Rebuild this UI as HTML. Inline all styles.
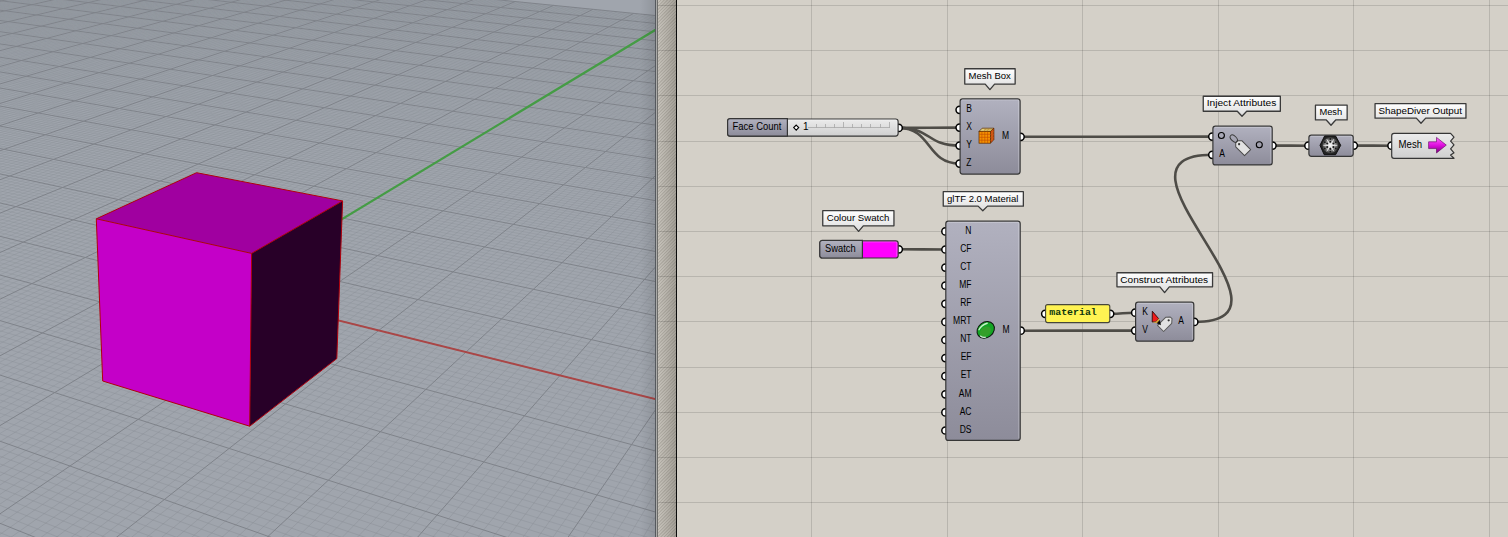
<!DOCTYPE html>
<html><head><meta charset="utf-8"><style>
html,body{margin:0;padding:0;}
body{width:1508px;height:537px;overflow:hidden;position:relative;background:#d4d0c8;font-family:"Liberation Sans",sans-serif;}
#sep{position:absolute;left:655px;top:0;width:22px;height:537px;}
</style></head><body>
<svg width="655" height="537" viewBox="0 0 655 537" style="position:absolute;left:0;top:0">
<defs><linearGradient id="vig" x1="0" x2="1"><stop offset="0" stop-color="#000" stop-opacity="0"/><stop offset="1" stop-color="#000" stop-opacity="0.10"/></linearGradient></defs>
<rect width="655" height="537" fill="#a0a5ad"/>
<polygon points="-5,-5 660,-5 660,16.03 -5,-50.55" fill="#a0a5ad"/>
<path d="M-2.0 -1.4L0.9 -2.0M-2.0 -0.4L5.5 -2.0M-2.0 0.6L10.2 -2.0M-2.0 2.7L19.4 -2.0M-2.0 3.7L24.1 -2.0M-2.0 4.8L28.7 -2.0M-2.0 5.9L33.4 -2.0M-2.0 6.9L38.0 -2.0M-2.0 8.0L42.6 -2.0M-2.0 9.1L47.3 -2.0M-2.0 10.2L51.9 -2.0M-2.0 11.3L56.6 -2.0M-2.0 13.5L65.8 -2.0M-2.0 14.7L70.5 -2.0M-2.0 15.8L75.1 -2.0M-2.0 17.0L79.8 -2.0M-2.0 18.1L84.4 -2.0M-2.0 19.3L89.0 -2.0M-2.0 20.5L93.7 -2.0M-2.0 21.7L98.3 -2.0M-2.0 22.9L103.0 -2.0M-2.0 25.4L112.2 -2.0M-2.0 26.6L116.9 -2.0M-2.0 27.9L121.5 -2.0M-2.0 29.2L126.1 -2.0M-2.0 30.4L130.8 -2.0M-2.0 31.7L135.4 -2.0M-2.0 33.0L140.0 -2.0M-2.0 34.4L144.7 -2.0M-2.0 35.7L149.3 -2.0M-2.0 38.4L158.6 -2.0M-2.0 39.8L163.2 -2.0M-2.0 41.1L167.9 -2.0M-2.0 42.5L172.5 -2.0M-2.0 44.0L177.1 -2.0M-2.0 45.4L181.8 -2.0M-2.0 46.8L186.4 -2.0M-2.0 48.3L191.0 -2.0M-2.0 49.7L195.6 -2.0M-2.0 52.7L204.9 -2.0M-2.0 54.2L209.5 -2.0M-2.0 55.8L214.2 -2.0M-2.0 57.3L218.8 -2.0M-2.0 58.9L223.4 -2.0M-2.0 60.5L228.1 -2.0M-2.0 62.1L232.7 -2.0M-2.0 63.7L237.3 -2.0M-2.0 65.3L242.0 -2.0M-2.0 68.6L251.2 -2.0M-2.0 70.3L255.8 -2.0M-2.0 72.0L260.5 -2.0M-2.0 73.7L265.1 -2.0M-2.0 75.5L269.7 -2.0M-2.0 77.2L274.4 -2.0M-2.0 79.0L279.0 -2.0M-2.0 80.8L283.6 -2.0M-2.0 82.6L288.2 -2.0M-2.0 86.4L297.5 -2.0M-2.0 88.2L302.1 -2.0M-2.0 90.1L306.7 -2.0M-2.0 92.1L311.4 -2.0M-2.0 94.0L316.0 -2.0M-2.0 96.0L320.6 -2.0M-2.0 98.0L325.2 -2.0M-2.0 100.0L329.9 -2.0M-2.0 102.1L334.5 -2.0M-2.0 106.2L343.7 -2.0M-2.0 108.3L348.4 -2.0M-2.0 110.5L353.0 -2.0M-2.0 112.7L357.6 -2.0M-2.0 114.9L362.2 -2.0M-2.0 117.1L366.9 -2.0M-2.0 119.4L371.5 -2.0M-2.0 121.6L376.1 -2.0M-2.0 124.0L380.7 -2.0M-2.0 128.7L390.0 -2.0M-2.0 131.1L394.6 -2.0M-2.0 133.5L399.2 -2.0M-2.0 136.0L403.8 -2.0M-2.0 138.5L408.4 -2.0M-2.0 141.0L413.1 -2.0M-2.0 143.6L417.7 -2.0M-2.0 146.2L422.3 -2.0M-2.0 148.8L426.9 -2.0M-2.0 154.2L436.2 -2.0M-2.0 157.0L440.8 -2.0M-2.0 159.8L445.4 -2.0M-2.0 162.6L450.0 -2.0M-2.0 165.5L454.6 -2.0M-2.0 168.4L459.3 -2.0M-2.0 171.3L463.9 -2.0M-2.0 174.3L468.5 -2.0M-2.0 177.4L473.1 -2.0M-2.0 183.6L481.8 -1.8M-2.0 186.8L485.5 -1.4M-2.0 190.0L489.2 -1.1M-2.0 193.3L492.9 -0.7M-2.0 196.6L496.6 -0.3M-2.0 200.0L500.3 0.0M-2.0 203.4L504.0 0.4M-2.0 206.9L507.8 0.8M-2.0 210.4L511.5 1.2M-2.0 217.7L519.0 1.9M-2.0 221.4L522.8 2.3M-2.0 225.2L526.6 2.7M-2.0 229.0L530.4 3.1M-2.0 232.9L534.2 3.4M-2.0 236.9L538.1 3.8M-2.0 240.9L541.9 4.2M-2.0 245.0L545.8 4.6M-2.0 249.2L549.6 5.0M-2.0 257.7L557.4 5.8M-2.0 262.1L561.3 6.1M-2.0 266.6L565.2 6.5M-2.0 271.1L569.1 6.9M-2.0 275.8L573.1 7.3M-2.0 280.5L577.0 7.7M-2.0 285.3L581.0 8.1M-2.0 290.2L585.0 8.5M-2.0 295.2L588.9 8.9M30.2 289.5L597.0 9.7M49.9 284.8L601.0 10.1M-2.0 310.3L-1.5 310.4M63.6 283.0L605.0 10.5M-2.0 305.6L18.2 311.3M82.8 278.4L609.1 10.9M-2.0 300.9L51.9 316.1M101.6 274.0L613.2 11.3M-2.0 296.3L86.2 321.0M125.0 267.0L617.2 11.7M-2.0 291.8L121.1 326.0M143.0 262.7L621.3 12.2M-2.0 287.4L156.6 331.0M151.2 263.6L625.4 12.6M-2.0 283.0L192.8 336.2M173.5 256.8L629.5 13.0M-2.0 278.7L229.6 341.4M207.6 248.7L637.8 13.8M-2.0 270.3L288.5 347.7M224.2 244.8L642.0 14.2M-2.0 266.3L326.9 353.2M236.6 243.1L646.2 14.6M-2.0 262.2L366.1 358.7M252.8 239.3L650.3 15.1M-2.0 258.3L405.9 364.4M268.7 235.6L654.5 15.5M-2.0 254.4L428.2 365.4M288.4 229.5L657.0 16.9M-2.0 250.5L469.1 371.2M303.7 225.9L657.0 19.8M-2.0 246.8L510.8 377.1M318.7 222.3L657.0 22.8M-2.0 243.1L553.3 383.1M337.4 216.5L657.0 25.8M-2.0 239.4L576.5 384.2M366.1 209.8L657.0 32.1M-2.0 232.2L657.0 394.7M377.3 208.3L657.0 35.3M-2.0 228.7L657.0 390.0M397.5 201.1L657.0 38.7M-2.0 225.3L657.0 385.4M410.9 198.0L657.0 42.1M-2.0 221.9L657.0 380.8M421.8 196.5L657.0 45.6M-2.0 218.5L657.0 376.3M440.7 189.7L657.0 49.2M-2.0 215.2L657.0 371.9M453.5 186.7L657.0 52.9M-2.0 212.0L657.0 367.5M464.0 185.2L657.0 56.6M-2.0 208.8L657.0 363.2M481.7 178.8L657.0 60.5M-2.0 205.6L657.0 359.0M509.0 171.2L657.0 68.6M-2.0 199.4L657.0 350.7M520.7 168.5L657.0 72.8M-2.0 196.4L657.0 346.6M532.3 165.9L657.0 77.1M-2.0 193.4L657.0 342.6M548.2 160.1L657.0 81.5M-2.0 190.4L657.0 338.6M557.9 158.7L657.0 86.1M-2.0 187.5L657.0 334.7M573.1 153.1L657.0 90.8M-2.0 184.7L657.0 330.9M583.9 150.7L657.0 95.6M-2.0 181.8L657.0 327.1M597.2 146.3L657.0 100.6M-2.0 179.0L657.0 323.3M607.6 144.0L657.0 105.7M-2.0 176.3L657.0 319.6M630.6 137.5L657.0 116.4M-2.0 170.9L657.0 312.4M644.0 132.5L657.0 122.0M-2.0 168.2L657.0 308.8M653.8 130.4L657.0 127.8M-2.0 165.6L657.0 305.3M-2.0 163.0L657.0 301.8M-2.0 160.4L657.0 298.4M-2.0 157.9L657.0 295.0M-2.0 155.4L657.0 291.7M-2.0 153.0L657.0 288.4M-2.0 150.5L657.0 285.1M-2.0 145.8L657.0 278.7M-2.0 143.4L657.0 275.6M-2.0 141.1L657.0 272.5M-2.0 138.8L657.0 269.4M-2.0 136.6L657.0 266.4M-2.0 134.4L657.0 263.4M-2.0 132.1L657.0 260.4M-2.0 130.0L657.0 257.5M-2.0 127.8L657.0 254.6M-2.0 123.6L657.0 248.9M-2.0 121.5L657.0 246.2M-2.0 119.4L657.0 243.4M-2.0 117.4L657.0 240.7M-2.0 115.4L657.0 238.0M-2.0 113.4L657.0 235.3M-2.0 111.4L657.0 232.7M-2.0 109.5L657.0 230.1M-2.0 107.6L657.0 227.5M-2.0 103.8L657.0 222.4M-2.0 101.9L657.0 219.9M-2.0 100.1L657.0 217.4M-2.0 98.3L657.0 215.0M-2.0 96.5L657.0 212.6M-2.0 94.7L657.0 210.2M-2.0 92.9L657.0 207.8M-2.0 91.2L657.0 205.5M-2.0 89.5L657.0 203.2M-2.0 86.1L657.0 198.6M-2.0 84.4L657.0 196.3M-2.0 82.7L657.0 194.1M-2.0 81.1L657.0 191.9M-2.0 79.5L657.0 189.7M-2.0 77.9L657.0 187.6M-2.0 76.3L657.0 185.5M-2.0 74.7L657.0 183.3M-2.0 73.1L657.0 181.2M-2.0 70.0L657.0 177.1M-2.0 68.5L657.0 175.1M-2.0 67.0L657.0 173.1M-2.0 65.5L657.0 171.1M-2.0 64.1L657.0 169.1M-2.0 62.6L657.0 167.2M-2.0 61.2L657.0 165.2M-2.0 59.7L657.0 163.3M-2.0 58.3L657.0 161.4M-2.0 55.5L657.0 157.7M-2.0 54.2L657.0 155.8M-2.0 52.8L657.0 154.0M-2.0 51.4L657.0 152.2M-2.0 50.1L657.0 150.4M-2.0 48.8L657.0 148.6M-2.0 47.5L657.0 146.8M-2.0 46.2L657.0 145.1M-2.0 44.9L657.0 143.3M-2.0 42.3L657.0 139.9M-2.0 41.1L657.0 138.2M-2.0 39.8L657.0 136.6M-2.0 38.6L657.0 134.9M-2.0 37.4L657.0 133.3M-2.0 36.2L657.0 131.6M-2.0 34.9L657.0 130.0M-2.0 33.8L657.0 128.4M-2.0 32.6L657.0 126.8M-2.0 30.2L657.0 123.7M-2.0 29.1L657.0 122.2M-2.0 27.9L657.0 120.6M-2.0 26.8L657.0 119.1M-2.0 25.7L657.0 117.6M-2.0 24.6L657.0 116.1M-2.0 23.5L657.0 114.6M-2.0 22.4L657.0 113.2M-2.0 21.3L657.0 111.7M-2.0 19.1L657.0 108.8M-2.0 18.1L657.0 107.4M-2.0 17.0L657.0 106.0M-2.0 16.0L657.0 104.6M-2.0 15.0L657.0 103.2M-2.0 13.9L657.0 101.8M-2.0 12.9L657.0 100.5M-2.0 11.9L657.0 99.1M-2.0 10.9L657.0 97.8M-2.0 8.9L657.0 95.1M-2.0 7.9L657.0 93.8M-2.0 7.0L657.0 92.5M-2.0 6.0L657.0 91.2M-2.0 5.1L657.0 89.9M-2.0 4.1L657.0 88.7M-2.0 3.2L657.0 87.4M-2.0 2.2L657.0 86.1M-2.0 1.3L657.0 84.9M-2.0 -0.5L657.0 82.4M-2.0 -1.4L657.0 81.2M0.6 -2.0L657.0 80.0M7.8 -2.0L657.0 78.8M15.0 -2.0L657.0 77.6M22.1 -2.0L657.0 76.5M29.3 -2.0L657.0 75.3M36.5 -2.0L657.0 74.1M43.7 -2.0L657.0 73.0M58.0 -2.0L657.0 70.7M65.2 -2.0L657.0 69.6M72.3 -2.0L657.0 68.4M79.5 -2.0L657.0 67.3M86.7 -2.0L657.0 66.2M93.8 -2.0L657.0 65.1M101.0 -2.0L657.0 64.0M108.2 -2.0L657.0 63.0M115.3 -2.0L657.0 61.9M129.7 -2.0L657.0 59.8M136.8 -2.0L657.0 58.7M144.0 -2.0L657.0 57.7M151.2 -2.0L657.0 56.6M158.3 -2.0L657.0 55.6M165.5 -2.0L657.0 54.6M172.6 -2.0L657.0 53.6M179.8 -2.0L657.0 52.6M187.0 -2.0L657.0 51.6M201.3 -2.0L657.0 49.6M208.4 -2.0L657.0 48.6M215.6 -2.0L657.0 47.6M222.7 -2.0L657.0 46.7M229.9 -2.0L657.0 45.7M237.1 -2.0L657.0 44.8M244.2 -2.0L657.0 43.8M251.4 -2.0L657.0 42.9M258.5 -2.0L657.0 41.9M272.8 -2.0L657.0 40.1M280.0 -2.0L657.0 39.2M287.1 -2.0L657.0 38.2M294.3 -2.0L657.0 37.3M301.4 -2.0L657.0 36.4M308.6 -2.0L657.0 35.6M315.7 -2.0L657.0 34.7M322.9 -2.0L657.0 33.8M330.0 -2.0L657.0 32.9M344.3 -2.0L657.0 31.2M351.4 -2.0L657.0 30.3M358.6 -2.0L657.0 29.5M365.7 -2.0L657.0 28.6M372.9 -2.0L657.0 27.8M380.0 -2.0L657.0 26.9M387.2 -2.0L657.0 26.1M394.3 -2.0L657.0 25.3M401.4 -2.0L657.0 24.4M415.7 -2.0L657.0 22.8M422.9 -2.0L657.0 22.0M430.0 -2.0L657.0 21.2M437.1 -2.0L657.0 20.4M444.3 -2.0L657.0 19.6M451.4 -2.0L657.0 18.8M458.5 -2.0L657.0 18.0M465.7 -2.0L657.0 17.3M472.8 -2.0L657.0 16.5" stroke="#878c94" stroke-width="1" fill="none" opacity="0.315"/><path d="M-2.0 433.3L41.9 448.7M-2.0 426.2L84.3 456.2M-2.0 419.3L109.4 457.5M-2.0 412.5L153.2 465.2M-2.0 405.8L197.9 473.1M-2.0 399.3L243.6 481.1M-2.0 392.9L290.3 489.3M-2.0 386.6L317.0 490.8M-2.0 380.5L365.2 499.2M-2.0 368.5L465.0 516.7M-2.0 362.7L493.0 518.3M-2.0 357.0L545.1 527.4M-2.0 351.5L598.5 536.6M-2.0 346.0L627.5 538.3M-2.0 340.6L653.3 539.0M-2.0 335.3L657.0 533.0M-2.0 330.1L657.0 526.1M-2.0 325.1L657.0 519.3M-2.0 305.4L30.2 289.5M-2.0 315.1L657.0 505.9M-2.0 310.7L49.9 284.8M-1.5 310.4L657.0 499.5M-2.0 316.1L63.6 283.0M18.2 311.3L657.0 493.1M-2.0 321.6L82.8 278.4M51.9 316.1L657.0 486.8M-2.0 327.1L101.6 274.0M86.2 321.0L657.0 480.7M-2.0 332.9L125.0 267.0M121.1 326.0L657.0 474.6M-2.0 338.7L143.0 262.7M156.6 331.0L657.0 468.7M-2.0 344.6L151.2 263.6M192.8 336.2L657.0 462.8M-2.0 350.7L173.5 256.8M229.6 341.4L657.0 457.1M-2.0 363.2L207.6 248.7M288.5 347.7L657.0 445.8M-2.0 369.7L224.2 244.8M326.9 353.2L657.0 440.4M-2.0 376.3L236.6 243.1M366.1 358.7L657.0 435.0M-2.0 383.0L252.8 239.3M405.9 364.4L657.0 429.7M-2.0 389.9L268.7 235.6M428.2 365.4L657.0 424.4M-2.0 397.0L288.4 229.5M469.1 371.2L657.0 419.3M-2.0 404.2L303.7 225.9M510.8 377.1L657.0 414.2M-2.0 411.5L318.7 222.3M553.3 383.1L657.0 409.2M-2.0 419.1L337.4 216.5M576.5 384.2L657.0 404.3M-0.2 433.6L366.1 209.8M16.6 431.3L377.3 208.3M42.1 423.5L397.5 201.1M67.0 415.9L410.9 198.0M83.2 413.6L421.8 196.5M107.3 406.2L440.7 189.7M130.7 399.1L453.5 186.7M146.5 396.8L464.0 185.2M169.1 389.8L481.7 178.8M206.5 380.9L509.0 171.2M227.9 374.3L520.7 168.5M248.8 367.8L532.3 165.9M269.3 361.6L548.2 160.1M283.9 359.4L557.9 158.7M303.7 353.3L573.1 153.1M323.1 347.4L583.9 150.7M346.0 338.5L597.2 146.3M364.5 332.9L607.6 144.0M396.1 325.3L630.6 137.5M413.7 320.0L644.0 132.5M430.9 314.7L653.8 130.4M451.2 306.7L657.0 133.8M467.6 301.7L657.0 139.9M483.7 296.8L657.0 146.3M496.3 294.9L657.0 152.9M511.9 290.1L657.0 159.8M527.3 285.5L657.0 166.8M560.0 273.7L657.0 181.8M574.4 269.4L657.0 189.6M588.6 265.2L657.0 197.8M605.2 258.3L657.0 206.3M618.8 254.3L657.0 215.2M632.2 250.3L657.0 224.4M647.8 243.8L657.0 233.9" stroke="#878c94" stroke-width="1" fill="none" opacity="0.367"/><path d="M-2.0 531.8L15.8 539.0M-2.0 513.5L63.1 539.0M-2.0 504.6L86.7 539.0M-2.0 495.9L110.3 539.0M-2.0 487.5L134.0 539.0M-2.0 479.2L157.6 539.0M-2.0 471.1L181.2 539.0M-2.0 463.2L204.8 539.0M-2.0 455.5L228.5 539.0M-2.0 447.9L252.1 539.0M41.9 448.7L299.3 539.0M84.3 456.2L322.9 539.0M109.4 457.5L346.5 539.0M153.2 465.2L370.1 539.0M197.9 473.1L393.8 539.0M243.6 481.1L417.4 539.0M290.3 489.3L441.0 539.0M317.0 490.8L464.6 539.0M365.2 499.2L488.2 539.0M465.0 516.7L535.3 539.0M493.0 518.3L558.9 539.0M545.1 527.4L582.5 539.0M598.5 536.6L606.1 539.0M627.5 538.3L629.7 539.0M-2.0 434.7L-0.2 433.6M-2.0 442.8L16.6 431.3M-2.0 451.1L42.1 423.5M-2.0 459.6L67.0 415.9M-2.0 468.3L83.2 413.6M-2.0 477.2L107.3 406.2M-2.0 486.3L130.7 399.1M-2.0 495.7L146.5 396.8M-2.0 505.4L169.1 389.8M-2.0 525.4L206.5 380.9M-2.0 535.8L227.9 374.3M8.6 539.0L248.8 367.8M23.7 539.0L269.3 361.6M38.8 539.0L283.9 359.4M53.9 539.0L303.7 353.3M69.0 539.0L323.1 347.4M84.1 539.0L346.0 338.5M99.2 539.0L364.5 332.9M129.4 539.0L396.1 325.3M144.5 539.0L413.7 320.0M159.6 539.0L430.9 314.7M174.7 539.0L451.2 306.7M189.7 539.0L467.6 301.7M204.8 539.0L483.7 296.8M219.9 539.0L496.3 294.9M235.0 539.0L511.9 290.1M250.1 539.0L527.3 285.5M280.3 539.0L560.0 273.7M295.4 539.0L574.4 269.4M310.5 539.0L588.6 265.2M325.5 539.0L605.2 258.3M340.6 539.0L618.8 254.3M355.7 539.0L632.2 250.3M370.8 539.0L647.8 243.8M385.9 539.0L657.0 243.9M401.0 539.0L657.0 254.3M431.1 539.0L657.0 276.5M446.2 539.0L657.0 288.4M461.3 539.0L657.0 300.9M476.4 539.0L657.0 313.9M491.4 539.0L657.0 327.6M506.5 539.0L657.0 341.9M521.6 539.0L657.0 357.1M536.7 539.0L657.0 373.0M551.7 539.0L657.0 389.8M581.9 539.0L657.0 426.3M596.9 539.0L657.0 446.2M612.0 539.0L657.0 467.4M627.1 539.0L657.0 489.9M642.2 539.0L657.0 513.8" stroke="#878c94" stroke-width="1" fill="none" opacity="0.420"/>
<path d="M-2.0 1.7L14.8 -2.0M-2.0 12.4L61.2 -2.0M-2.0 24.1L107.6 -2.0M-2.0 37.0L153.9 -2.0M-2.0 51.2L200.3 -2.0M-2.0 67.0L246.6 -2.0M-2.0 84.5L292.9 -2.0M-2.0 104.1L339.1 -2.0M-2.0 126.3L385.3 -2.0M-2.0 151.5L431.5 -2.0M-2.0 180.5L477.7 -2.0M-2.0 522.5L39.4 539.0M-2.0 214.0L515.3 1.5M-2.0 440.5L275.7 539.0M-2.0 253.4L553.5 5.4M-2.0 374.4L511.8 539.0M-2.0 300.2L593.0 9.3M-2.0 320.0L657.0 512.5M-2.0 356.9L633.7 13.4M-2.0 274.5L657.0 451.4M-2.0 426.8L657.0 28.9M-2.0 235.8L657.0 399.5M-2.0 515.2L657.0 64.5M-2.0 202.5L657.0 354.8M114.3 539.0L657.0 111.0M-2.0 173.5L657.0 316.0M265.2 539.0L657.0 174.2M-2.0 148.1L657.0 281.9M416.0 539.0L657.0 265.2M-2.0 125.7L657.0 251.8M566.8 539.0L657.0 407.6M-2.0 105.7L657.0 224.9M-2.0 87.7L657.0 200.9M-2.0 71.6L657.0 179.2M-2.0 56.9L657.0 159.5M-2.0 43.6L657.0 141.6M-2.0 31.4L657.0 125.3M-2.0 20.2L657.0 110.3M-2.0 9.9L657.0 96.4M-2.0 0.4L657.0 83.7M50.8 -2.0L657.0 71.8M122.5 -2.0L657.0 60.8M194.1 -2.0L657.0 50.6M265.7 -2.0L657.0 41.0M337.2 -2.0L657.0 32.0M408.6 -2.0L657.0 23.6M479.9 -2.0L657.0 15.7" stroke="#7f838a" stroke-width="1" fill="none"/>
<path d="M222.1 291.5L657.0 399.5" stroke="#aa4646" stroke-width="2"/>
<path d="M222.1 291.5L657.0 28.9" stroke="#459c45" stroke-width="2.2"/>
<polygon points="96.3,218.8 196.6,172.7 342.6,200.9 251.6,253.4" fill="#a000a0"/>
<polygon points="96.3,218.8 251.6,253.4 249.7,426.2 102.7,381" fill="#c400c8"/>
<polygon points="251.6,253.4 342.6,200.9 336.8,358.6 249.7,426.2" fill="#280028"/>
<path d="M96.3 218.8L196.6 172.7L342.6 200.9L336.8 358.6L249.7 426.2L102.7 381ZM96.3 218.8L251.6 253.4L342.6 200.9M251.6 253.4L249.7 426.2" stroke="#b0000c" stroke-width="1" fill="none" stroke-linejoin="round"/>
<rect x="640" y="0" width="15" height="537" fill="url(#vig)"/>
</svg>
<div id="sep">
<div style="position:absolute;left:0;top:0;width:1px;height:537px;background:#55595e"></div>
<div style="position:absolute;left:1px;top:0;width:1px;height:537px;background:#a9a9a7"></div>
<div style="position:absolute;left:2px;top:0;width:1px;height:537px;background:#6d6d6b"></div>
<div style="position:absolute;left:3px;top:0;width:18px;height:537px;background:repeating-linear-gradient(-45deg,rgba(0,0,0,0) 0px,rgba(0,0,0,0) 0.9px,rgba(60,55,45,0.15) 1.3px,rgba(60,55,45,0.15) 1.9px,rgba(0,0,0,0) 2.3px),linear-gradient(90deg,#c6c2ba,#b2aea6 60%,#a29e96)"></div>
</div>
<svg width="1508" height="537" viewBox="0 0 1508 537" style="position:absolute;left:0;top:0" font-family="'Liberation Sans', sans-serif">
<defs>
<linearGradient id="cg" x1="0" y1="0" x2="0" y2="1"><stop offset="0" stop-color="#b1b1bf"/><stop offset="1" stop-color="#8d8c9a"/></linearGradient>
<linearGradient id="tg" x1="0" y1="0" x2="0" y2="1"><stop offset="0" stop-color="#ffffff"/><stop offset="1" stop-color="#dcdcdc"/></linearGradient>
<linearGradient id="sg" x1="0" y1="0" x2="0" y2="1"><stop offset="0" stop-color="#ececec"/><stop offset="1" stop-color="#cfcfcf"/></linearGradient>
<linearGradient id="ag" x1="0" y1="0" x2="0" y2="1"><stop offset="0" stop-color="#ff66ff"/><stop offset="0.5" stop-color="#e010e0"/><stop offset="1" stop-color="#7a007a"/></linearGradient>
<radialGradient id="eg" cx="0.35" cy="0.35" r="0.7"><stop offset="0" stop-color="#9ad86a"/><stop offset="0.6" stop-color="#3a9a2a"/><stop offset="1" stop-color="#1e5a14"/></radialGradient>
<radialGradient id="hg" cx="0.5" cy="0.5" r="0.5"><stop offset="0" stop-color="#ffffff"/><stop offset="0.5" stop-color="#a8a8a8"/><stop offset="1" stop-color="#303030"/></radialGradient>
</defs>
<!-- canvas bg -->
<rect x="677" y="0" width="831" height="537" fill="#d4d0c8"/>
<g stroke="#000" stroke-opacity="0.13" stroke-width="1" shape-rendering="crispEdges">
<line x1="811.5" y1="0" x2="811.5" y2="537"/>
<line x1="947.5" y1="0" x2="947.5" y2="537"/>
<line x1="1082.5" y1="0" x2="1082.5" y2="537"/>
<line x1="1218.5" y1="0" x2="1218.5" y2="537"/>
<line x1="1353.5" y1="0" x2="1353.5" y2="537"/>
<line x1="1489.5" y1="0" x2="1489.5" y2="537"/>
<line x1="658" y1="5.5" x2="1508" y2="5.5"/>
<line x1="658" y1="50.5" x2="1508" y2="50.5"/>
<line x1="658" y1="95.5" x2="1508" y2="95.5"/>
<line x1="658" y1="141.5" x2="1508" y2="141.5"/>
<line x1="658" y1="186.5" x2="1508" y2="186.5"/>
<line x1="658" y1="231.5" x2="1508" y2="231.5"/>
<line x1="658" y1="276.5" x2="1508" y2="276.5"/>
<line x1="658" y1="321.5" x2="1508" y2="321.5"/>
<line x1="658" y1="367.5" x2="1508" y2="367.5"/>
<line x1="658" y1="412.5" x2="1508" y2="412.5"/>
<line x1="658" y1="457.5" x2="1508" y2="457.5"/>
<line x1="658" y1="502.5" x2="1508" y2="502.5"/>
</g>
<!-- wires -->
<g fill="none" stroke="#4e4c47" stroke-width="2.6" stroke-linecap="round">
<path d="M898.7 127.9C932.195 127.9 926.105 127.6 959.6 127.6"/>
<path d="M898.7 127.9C932.195 127.9 926.105 145.6 959.6 145.6"/>
<path d="M898.7 127.9C932.195 127.9 926.105 163.6 959.6 163.6"/>
<path d="M1020.6 136.8C1126.035 136.8 1106.865 136.6 1212.3 136.6"/>
<path d="M1272.5 145.6C1292.2450000000001 145.6 1288.655 145.7 1308.4 145.7"/>
<path d="M1353.8 145.6C1374.535 145.6 1370.7649999999999 145.7 1391.5 145.7"/>
<path d="M898.8 249.3C924.43 249.3 919.77 249.5 945.4 249.5"/>
<path d="M1020.7 330.7C1083.675 330.7 1072.2250000000001 330.6 1135.2 330.6"/>
<path d="M1110.2 313.8C1123.95 313.8 1121.45 312.7 1135.2 312.7"/>
<path d="M1194.3 321.9C1315.3 321.9 1091.3 154.8 1212.3 154.8"/>
</g>
<!-- components -->
<g id="comps">
<circle cx="898.7" cy="127.9" r="3.6" fill="#fff" stroke="#000" stroke-width="1.5"/>
<rect x="727.60" y="119.00" width="170.50" height="17.10" rx="2.5" fill="url(#sg)" stroke="#363636" stroke-width="1.2"/><path d="M729.50 120.10H896.70V134.20" fill="none" stroke="#fff" stroke-opacity="0.28" stroke-width="1"/>
<path d="M727.6 121a2.4 2.4 0 0 1 2.4-2.4H787.4V136.1H730a2.4 2.4 0 0 1-2.4-2.4Z" fill="url(#cg)" stroke="#363636" stroke-width="1.2"/>
<text x="732.6" y="130.1" font-size="10" fill="#000" textLength="48.8" lengthAdjust="spacingAndGlyphs">Face Count</text>
<path d="M796.2 125.1L798.7 127.6L796.2 130.1L793.7 127.6Z" fill="#fff" stroke="#000" stroke-width="1.1"/>
<text x="802.9" y="130.1" font-size="10" fill="#000">1</text>
<g stroke="#a8a8a8" stroke-width="0.8" shape-rendering="crispEdges"><line x1="808" y1="127.5" x2="890" y2="127.5"/><line x1="816" y1="123.5" x2="816" y2="127.5"/><line x1="825" y1="123.5" x2="825" y2="127.5"/><line x1="834" y1="123.5" x2="834" y2="127.5"/><line x1="843" y1="122" x2="843" y2="127.5"/><line x1="852" y1="123.5" x2="852" y2="127.5"/><line x1="861" y1="123.5" x2="861" y2="127.5"/><line x1="870" y1="123.5" x2="870" y2="127.5"/><line x1="880" y1="123.5" x2="880" y2="127.5"/><line x1="889.5" y1="122" x2="889.5" y2="127.5"/></g>
<path d="M964.75 68.75H1015.15V84.05H994.60L989.90 89.60L985.20 84.05H964.75Z" fill="url(#tg)" stroke="#3a3a3a" stroke-width="1.3" stroke-linejoin="round"/><text x="968.6" y="78.7" font-size="9.6" fill="#000" textLength="42.3" lengthAdjust="spacingAndGlyphs">Mesh Box</text>
<circle cx="959.6" cy="109.8" r="3.6" fill="#fff" stroke="#000" stroke-width="1.5"/>
<circle cx="959.6" cy="127.6" r="3.6" fill="#fff" stroke="#000" stroke-width="1.5"/>
<circle cx="959.6" cy="145.6" r="3.6" fill="#fff" stroke="#000" stroke-width="1.5"/>
<circle cx="959.6" cy="163.6" r="3.6" fill="#fff" stroke="#000" stroke-width="1.5"/>
<circle cx="1020.6" cy="136.8" r="3.6" fill="#fff" stroke="#000" stroke-width="1.5"/>
<rect x="960.10" y="98.80" width="60.00" height="75.30" rx="2.5" fill="url(#cg)" stroke="#363636" stroke-width="1.2"/><path d="M962.00 99.90H1018.70V172.20" fill="none" stroke="#fff" stroke-opacity="0.28" stroke-width="1"/>
<g><text x="966.2" y="112.1" font-size="10" fill="#000" text-anchor="start" textLength="5.67" lengthAdjust="spacingAndGlyphs">B</text><text x="966.2" y="130.2" font-size="10" fill="#000" text-anchor="start" textLength="5.67" lengthAdjust="spacingAndGlyphs">X</text><text x="966.2" y="148.2" font-size="10" fill="#000" text-anchor="start" textLength="5.67" lengthAdjust="spacingAndGlyphs">Y</text><text x="966.2" y="166.1" font-size="10" fill="#000" text-anchor="start" textLength="5.19" lengthAdjust="spacingAndGlyphs">Z</text><text x="1002" y="138.7" font-size="10" fill="#000" text-anchor="start" textLength="7.08" lengthAdjust="spacingAndGlyphs">M</text></g>
<g>
<polygon points="979,131.4 982.2,128.2 993.9,128.2 990.5,131.4" fill="#e2cf78" stroke="#5a2a00" stroke-width="0.7"/>
<polygon points="990.5,131.4 993.9,128.2 993.9,139.6 990.5,143.2" fill="#e0400a" stroke="#5a2a00" stroke-width="0.7"/>
<rect x="979" y="131.4" width="11.5" height="11.8" fill="#f49200" stroke="#5a2a00" stroke-width="0.7"/>
<path d="M981.9 131.4V143.2M984.8 131.4V143.2M987.6 131.4V143.2M979 134.3H990.5M979 137.3H990.5M979 140.2H990.5" stroke="#c04a00" stroke-width="0.6"/><path d="M984 129.8H992.5M986.5 128.2L983.5 131.4M989.5 128.2L986.5 131.4M992.2 129.8V141M990.5 134.5L993.9 131.3M990.5 137.5L993.9 134.3M990.5 140.5L993.9 137.3" stroke="#b07a20" stroke-width="0.5" fill="none"/>
</g>
<path d="M822.75 210.65H893.95V225.85H863.30L858.60 231.40L853.90 225.85H822.75Z" fill="url(#tg)" stroke="#3a3a3a" stroke-width="1.3" stroke-linejoin="round"/><text x="826.8" y="220.6" font-size="9.6" fill="#000" textLength="62.5" lengthAdjust="spacingAndGlyphs">Colour Swatch</text>
<circle cx="898.8" cy="249.3" r="3.6" fill="#fff" stroke="#000" stroke-width="1.5"/>
<rect x="819.80" y="240.80" width="78.40" height="17.20" rx="2.5" fill="#ff00ff" stroke="#363636" stroke-width="1.2"/><path d="M821.70 241.90H896.80V256.10" fill="none" stroke="#fff" stroke-opacity="0.28" stroke-width="1"/>
<path d="M819.8 242.8a2.4 2.4 0 0 1 2.4-2.4H862.4V258H822.2a2.4 2.4 0 0 1-2.4-2.4Z" fill="url(#cg)" stroke="#363636" stroke-width="1.2"/>
<text x="825" y="251.6" font-size="10" fill="#000" textLength="30.6" lengthAdjust="spacingAndGlyphs">Swatch</text>
<path d="M943.25 191.65H1023.35V206.15H987.50L982.80 210.80L978.10 206.15H943.25Z" fill="url(#tg)" stroke="#3a3a3a" stroke-width="1.3" stroke-linejoin="round"/><text x="947" y="201.8" font-size="9.6" fill="#000" textLength="71.4" lengthAdjust="spacingAndGlyphs">glTF 2.0 Material</text>
<circle cx="945.4" cy="231.4" r="3.6" fill="#fff" stroke="#000" stroke-width="1.5"/>
<circle cx="945.4" cy="249.5" r="3.6" fill="#fff" stroke="#000" stroke-width="1.5"/>
<circle cx="945.4" cy="267.6" r="3.6" fill="#fff" stroke="#000" stroke-width="1.5"/>
<circle cx="945.4" cy="285.7" r="3.6" fill="#fff" stroke="#000" stroke-width="1.5"/>
<circle cx="945.4" cy="303.8" r="3.6" fill="#fff" stroke="#000" stroke-width="1.5"/>
<circle cx="945.4" cy="321.9" r="3.6" fill="#fff" stroke="#000" stroke-width="1.5"/>
<circle cx="945.4" cy="340.0" r="3.6" fill="#fff" stroke="#000" stroke-width="1.5"/>
<circle cx="945.4" cy="358.1" r="3.6" fill="#fff" stroke="#000" stroke-width="1.5"/>
<circle cx="945.4" cy="376.2" r="3.6" fill="#fff" stroke="#000" stroke-width="1.5"/>
<circle cx="945.4" cy="394.3" r="3.6" fill="#fff" stroke="#000" stroke-width="1.5"/>
<circle cx="945.4" cy="412.4" r="3.6" fill="#fff" stroke="#000" stroke-width="1.5"/>
<circle cx="945.4" cy="430.5" r="3.6" fill="#fff" stroke="#000" stroke-width="1.5"/>
<circle cx="1020.7" cy="330.7" r="3.6" fill="#fff" stroke="#000" stroke-width="1.5"/>
<rect x="945.80" y="221.20" width="74.40" height="219.20" rx="2.5" fill="url(#cg)" stroke="#363636" stroke-width="1.2"/><path d="M947.70 222.30H1018.80V438.50" fill="none" stroke="#fff" stroke-opacity="0.28" stroke-width="1"/>
<g><text x="971.5" y="233.6" font-size="10" fill="#000" text-anchor="end" textLength="6.14" lengthAdjust="spacingAndGlyphs">N</text><text x="971.5" y="251.7" font-size="10" fill="#000" text-anchor="end" textLength="11.33" lengthAdjust="spacingAndGlyphs">CF</text><text x="971.5" y="269.8" font-size="10" fill="#000" text-anchor="end" textLength="11.33" lengthAdjust="spacingAndGlyphs">CT</text><text x="971.5" y="287.9" font-size="10" fill="#000" text-anchor="end" textLength="12.27" lengthAdjust="spacingAndGlyphs">MF</text><text x="971.5" y="306.0" font-size="10" fill="#000" text-anchor="end" textLength="11.33" lengthAdjust="spacingAndGlyphs">RF</text><text x="971.5" y="324.1" font-size="10" fill="#000" text-anchor="end" textLength="18.41" lengthAdjust="spacingAndGlyphs">MRT</text><text x="971.5" y="342.2" font-size="10" fill="#000" text-anchor="end" textLength="11.33" lengthAdjust="spacingAndGlyphs">NT</text><text x="971.5" y="360.3" font-size="10" fill="#000" text-anchor="end" textLength="10.86" lengthAdjust="spacingAndGlyphs">EF</text><text x="971.5" y="378.4" font-size="10" fill="#000" text-anchor="end" textLength="10.86" lengthAdjust="spacingAndGlyphs">ET</text><text x="971.5" y="396.5" font-size="10" fill="#000" text-anchor="end" textLength="12.75" lengthAdjust="spacingAndGlyphs">AM</text><text x="971.5" y="414.6" font-size="10" fill="#000" text-anchor="end" textLength="11.81" lengthAdjust="spacingAndGlyphs">AC</text><text x="971.5" y="432.7" font-size="10" fill="#000" text-anchor="end" textLength="11.81" lengthAdjust="spacingAndGlyphs">DS</text><text x="1006" y="332.7" font-size="10" fill="#000" text-anchor="middle" textLength="7.08" lengthAdjust="spacingAndGlyphs">M</text></g>
<g transform="rotate(-38 985.7 329.9)"><ellipse cx="985.7" cy="329.9" rx="9.3" ry="7.6" fill="#13a424" stroke="#0c140c" stroke-width="1"/><ellipse cx="984.5" cy="331" rx="6" ry="4.5" fill="#5a9a30" opacity="0.45"/><path d="M980.5 325.6Q985.7 323.4 991 325.6" stroke="#e8ffe8" stroke-width="1.3" fill="none" opacity="0.85" stroke-linecap="round"/><path d="M977.8 331.5Q978.5 334.5 981 335.5" stroke="#ffffff" stroke-width="1.2" fill="none" opacity="0.8" stroke-linecap="round"/></g>
<circle cx="1045.2" cy="313.8" r="3.6" fill="#fff" stroke="#000" stroke-width="1.5"/>
<circle cx="1110.2" cy="313.8" r="3.6" fill="#fff" stroke="#000" stroke-width="1.5"/>
<rect x="1045.6" y="304.6" width="64.2" height="18" rx="2" fill="#fff352" stroke="#46463a" stroke-width="1.1"/>
<text x="1049.3" y="315.3" font-size="9.6" font-family="'Liberation Mono', monospace" font-weight="bold" fill="#0e360e" textLength="47.5" lengthAdjust="spacingAndGlyphs">material</text>
<path d="M1116.95 272.75H1212.55V286.85H1169.30L1164.60 292.60L1159.90 286.85H1116.95Z" fill="url(#tg)" stroke="#3a3a3a" stroke-width="1.3" stroke-linejoin="round"/><text x="1120.3" y="282.8" font-size="9.6" fill="#000" textLength="87.8" lengthAdjust="spacingAndGlyphs">Construct Attributes</text>
<circle cx="1135.2" cy="312.7" r="3.6" fill="#fff" stroke="#000" stroke-width="1.5"/>
<circle cx="1135.2" cy="330.6" r="3.6" fill="#fff" stroke="#000" stroke-width="1.5"/>
<circle cx="1194.3" cy="321.9" r="3.6" fill="#fff" stroke="#000" stroke-width="1.5"/>
<rect x="1135.60" y="302.20" width="58.20" height="39.00" rx="2.5" fill="url(#cg)" stroke="#363636" stroke-width="1.2"/><path d="M1137.50 303.30H1192.40V339.30" fill="none" stroke="#fff" stroke-opacity="0.28" stroke-width="1"/>
<g><text x="1145" y="314.8" font-size="10" fill="#000" text-anchor="middle" textLength="5.67" lengthAdjust="spacingAndGlyphs">K</text><text x="1145" y="333.0" font-size="10" fill="#000" text-anchor="middle" textLength="5.67" lengthAdjust="spacingAndGlyphs">V</text><text x="1181.2" y="324.3" font-size="10" fill="#000" text-anchor="middle" textLength="5.67" lengthAdjust="spacingAndGlyphs">A</text></g>
<g transform="translate(1165.5 323.5) rotate(-45)">
<path d="M-7 -4.3H4.5L8 -1.2V1.2L4.5 4.3H-7Z" fill="#e2e2e2" stroke="#5a5a5a" stroke-width="1" stroke-linejoin="round"/>
<circle cx="4.5" cy="0" r="1.1" fill="#333"/>
</g>
<path d="M1152.3 311.2L1158.6 318.6L1156.2 321.6L1152.2 322Z" fill="#ee1a1a" stroke="#200000" stroke-width="0.8" stroke-linejoin="round"/>
<path d="M1158.6 318.6L1159.6 320.4L1157.2 323.2L1152.2 322L1156.2 321.6Z" fill="#d8a030"/>
<path d="M1159.6 320.4L1160.6 324.8L1157.2 323.2Z" fill="#000" stroke="#000" stroke-width="0.5" stroke-linejoin="round"/>
<path d="M1203.25 96.25H1280.35V111.25H1246.70L1242.00 116.20L1237.30 111.25H1203.25Z" fill="url(#tg)" stroke="#3a3a3a" stroke-width="1.3" stroke-linejoin="round"/><text x="1206.7" y="106.4" font-size="9.6" fill="#000" textLength="69.6" lengthAdjust="spacingAndGlyphs">Inject Attributes</text>
<circle cx="1212.3" cy="136.6" r="3.6" fill="#fff" stroke="#000" stroke-width="1.5"/>
<circle cx="1212.3" cy="154.8" r="3.6" fill="#fff" stroke="#000" stroke-width="1.5"/>
<circle cx="1272.5" cy="145.6" r="3.6" fill="#fff" stroke="#000" stroke-width="1.5"/>
<rect x="1212.90" y="126.20" width="59.30" height="38.70" rx="2.5" fill="url(#cg)" stroke="#363636" stroke-width="1.2"/><path d="M1214.80 127.30H1270.80V163.00" fill="none" stroke="#fff" stroke-opacity="0.28" stroke-width="1"/>
<g><text x="1222" y="157.2" font-size="10" fill="#000" text-anchor="middle" textLength="5.67" lengthAdjust="spacingAndGlyphs">A</text></g><circle cx="1221.4" cy="135.5" r="3" fill="none" stroke="#000" stroke-width="1.1"/><circle cx="1259.3" cy="144.8" r="3" fill="none" stroke="#000" stroke-width="1.1"/>
<g transform="translate(1243 148) rotate(45)">
<path d="M-6 -4.3H6.5V4.3H-6L-9 1.3V-1.3Z" fill="#e2e2e2" stroke="#4a4a4a" stroke-width="1" stroke-linejoin="round"/>
<circle cx="-5.5" cy="0" r="1.1" fill="#333"/>
</g>
<ellipse cx="1233.8" cy="138.6" rx="4.4" ry="2.6" transform="rotate(45 1233.8 138.6)" fill="none" stroke="#3a3a3a" stroke-width="1"/>
<path d="M1315.45 105.15H1347.15V119.95H1335.70L1331.00 125.20L1326.30 119.95H1315.45Z" fill="url(#tg)" stroke="#3a3a3a" stroke-width="1.3" stroke-linejoin="round"/><text x="1319.4" y="115.2" font-size="9.6" fill="#000" textLength="22.8" lengthAdjust="spacingAndGlyphs">Mesh</text>
<circle cx="1308.4" cy="145.7" r="3.6" fill="#fff" stroke="#000" stroke-width="1.5"/>
<circle cx="1353.8" cy="145.6" r="3.6" fill="#fff" stroke="#000" stroke-width="1.5"/>
<rect x="1308.90" y="135.10" width="44.30" height="21.20" rx="2.5" fill="url(#cg)" stroke="#363636" stroke-width="1.2"/><path d="M1310.80 136.20H1351.80V154.40" fill="none" stroke="#fff" stroke-opacity="0.28" stroke-width="1"/>
<polygon points="1324.6,136 1335.6,136 1340.7,145.3 1335.6,154.7 1324.2,154.7 1320,145.3" fill="#232323" stroke="#101010" stroke-width="1"/>
<circle cx="1330.3" cy="145.3" r="8.2" fill="url(#hg)"/>
<path d="M1330.30 145.30L1337.30 145.30M1330.30 145.30L1333.80 151.36M1330.30 145.30L1326.80 151.36M1330.30 145.30L1323.30 145.30M1330.30 145.30L1326.80 139.24M1330.30 145.30L1333.80 139.24" stroke="#f4f4f4" stroke-width="0.9" opacity="0.9"/><polygon points="1333.94,147.40 1330.30,149.50 1326.66,147.40 1326.66,143.20 1330.30,141.10 1333.94,143.20" fill="none" stroke="#e0e0e0" stroke-width="0.7" opacity="0.8"/>
<g fill="#1a1a1a"><circle cx="1333.42" cy="147.10" r="1.05"/><circle cx="1330.30" cy="148.90" r="1.05"/><circle cx="1327.18" cy="147.10" r="1.05"/><circle cx="1327.18" cy="143.50" r="1.05"/><circle cx="1330.30" cy="141.70" r="1.05"/><circle cx="1333.42" cy="143.50" r="1.05"/><circle cx="1335.76" cy="148.45" r="0.9"/><circle cx="1330.30" cy="151.60" r="0.9"/><circle cx="1324.84" cy="148.45" r="0.9"/><circle cx="1324.84" cy="142.15" r="0.9"/><circle cx="1330.30" cy="139.00" r="0.9"/><circle cx="1335.76" cy="142.15" r="0.9"/></g>
<path d="M1375.05 103.65H1465.95V118.15H1425.70L1421.00 123.30L1416.30 118.15H1375.05Z" fill="url(#tg)" stroke="#3a3a3a" stroke-width="1.3" stroke-linejoin="round"/><text x="1378.5" y="113.8" font-size="9.6" fill="#000" textLength="83.5" lengthAdjust="spacingAndGlyphs">ShapeDiver Output</text>
<circle cx="1391.5" cy="145.7" r="3.6" fill="#fff" stroke="#000" stroke-width="1.5"/>
<path d="M1394 133.4H1450.6L1454 137.1L1450.6 141.1L1454 144.9L1450.6 148.9L1454 152.8L1450.6 155.1L1454 158.3H1394a2.3 2.3 0 0 1-2.3-2.3V135.7a2.3 2.3 0 0 1 2.3-2.3Z" fill="url(#sg)" stroke="#363636" stroke-width="1.2" stroke-linejoin="round"/>
<text x="1398.6" y="148.3" font-size="10" fill="#000" textLength="23.5" lengthAdjust="spacingAndGlyphs">Mesh</text>
<path d="M1428.6 141.8H1436.5V137.4L1446.3 145.1L1436.5 153V148.6H1428.6Z" fill="url(#ag)" stroke="#5a005a" stroke-width="0.6" stroke-linejoin="round"/>
</g>
</svg>

<div style="position:absolute;left:676px;top:0;width:1px;height:537px;background:#0a0a0a"></div>
</body></html>
